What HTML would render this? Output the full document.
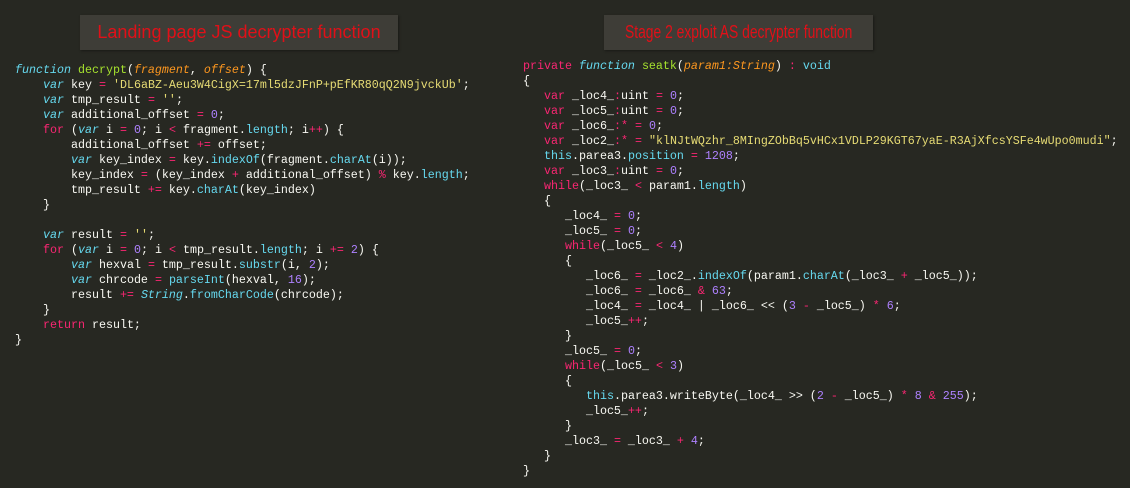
<!DOCTYPE html>
<html><head><meta charset="utf-8"><style>
html,body{margin:0;padding:0;width:1130px;height:488px;background:#272822;overflow:hidden}
.t{position:absolute;top:15px;height:35px;background:#3e3d37;color:#e01018;font:18px "Liberation Sans",sans-serif;line-height:35px;text-align:center;white-space:nowrap;box-shadow:1px 1px 2px #1a1a16}
.t span{position:absolute;left:21px;top:0;transform-origin:0 50%}
pre{position:absolute;margin:0;font-family:"Liberation Mono",monospace;font-size:11.67px;line-height:15px;color:#f8f8f2;white-space:pre}
.k{color:#f92672}.i{color:#66d9ef;font-style:italic}.f{color:#a6e22e}.p{color:#fd971f;font-style:italic}
.s{color:#e6db74}.n{color:#ae81ff}.m{color:#66d9ef}.c{color:#66d9ef}
</style></head><body>
<div class="t" style="left:80px;width:318px">Landing page JS decrypter function</div>
<div class="t" style="left:604px;width:269px"><span style="transform:scaleX(0.77)">Stage 2 exploit AS decrypter function</span></div>
<pre style="left:15px;top:63px"><span class="i">function</span> <span class="f">decrypt</span>(<span class="p">fragment</span>, <span class="p">offset</span>) {
    <span class="i">var</span> key <span class="k">=</span> <span class="s">'DL6aBZ-Aeu3W4CigX=17ml5dzJFnP+pEfKR80qQ2N9jvckUb'</span>;
    <span class="i">var</span> tmp_result <span class="k">=</span> <span class="s">''</span>;
    <span class="i">var</span> additional_offset <span class="k">=</span> <span class="n">0</span>;
    <span class="k">for</span> (<span class="i">var</span> i <span class="k">=</span> <span class="n">0</span>; i <span class="k">&lt;</span> fragment.<span class="m">length</span>; i<span class="k">++</span>) {
        additional_offset <span class="k">+=</span> offset;
        <span class="i">var</span> key_index <span class="k">=</span> key.<span class="m">indexOf</span>(fragment.<span class="m">charAt</span>(i));
        key_index <span class="k">=</span> (key_index <span class="k">+</span> additional_offset) <span class="k">%</span> key.<span class="m">length</span>;
        tmp_result <span class="k">+=</span> key.<span class="m">charAt</span>(key_index)
    }

    <span class="i">var</span> result <span class="k">=</span> <span class="s">''</span>;
    <span class="k">for</span> (<span class="i">var</span> i <span class="k">=</span> <span class="n">0</span>; i <span class="k">&lt;</span> tmp_result.<span class="m">length</span>; i <span class="k">+=</span> <span class="n">2</span>) {
        <span class="i">var</span> hexval <span class="k">=</span> tmp_result.<span class="m">substr</span>(i, <span class="n">2</span>);
        <span class="i">var</span> chrcode <span class="k">=</span> <span class="m">parseInt</span>(hexval, <span class="n">16</span>);
        result <span class="k">+=</span> <span class="i">String</span>.<span class="m">fromCharCode</span>(chrcode);
    }
    <span class="k">return</span> result;
}</pre>
<pre style="left:523px;top:59px"><span class="k">private</span> <span class="i">function</span> <span class="f">seatk</span>(<span class="p">param1:String</span>) <span class="k">:</span> <span class="c">void</span>
{
   <span class="k">var</span> _loc4_<span class="k">:</span>uint <span class="k">=</span> <span class="n">0</span>;
   <span class="k">var</span> _loc5_<span class="k">:</span>uint <span class="k">=</span> <span class="n">0</span>;
   <span class="k">var</span> _loc6_<span class="k">:*</span> <span class="k">=</span> <span class="n">0</span>;
   <span class="k">var</span> _loc2_<span class="k">:*</span> <span class="k">=</span> <span class="s">"klNJtWQzhr_8MIngZObBq5vHCx1VDLP29KGT67yaE-R3AjXfcsYSFe4wUpo0mudi"</span>;
   <span class="c">this</span>.parea3.<span class="m">position</span> <span class="k">=</span> <span class="n">1208</span>;
   <span class="k">var</span> _loc3_<span class="k">:</span>uint <span class="k">=</span> <span class="n">0</span>;
   <span class="k">while</span>(_loc3_ <span class="k">&lt;</span> param1.<span class="m">length</span>)
   {
      _loc4_ <span class="k">=</span> <span class="n">0</span>;
      _loc5_ <span class="k">=</span> <span class="n">0</span>;
      <span class="k">while</span>(_loc5_ <span class="k">&lt;</span> <span class="n">4</span>)
      {
         _loc6_ <span class="k">=</span> _loc2_.<span class="m">indexOf</span>(param1.<span class="m">charAt</span>(_loc3_ <span class="k">+</span> _loc5_));
         _loc6_ <span class="k">=</span> _loc6_ <span class="k">&amp;</span> <span class="n">63</span>;
         _loc4_ <span class="k">=</span> _loc4_ | _loc6_ &lt;&lt; (<span class="n">3</span> <span class="k">-</span> _loc5_) <span class="k">*</span> <span class="n">6</span>;
         _loc5_<span class="k">++</span>;
      }
      _loc5_ <span class="k">=</span> <span class="n">0</span>;
      <span class="k">while</span>(_loc5_ <span class="k">&lt;</span> <span class="n">3</span>)
      {
         <span class="c">this</span>.parea3.writeByte(_loc4_ &gt;&gt; (<span class="n">2</span> <span class="k">-</span> _loc5_) <span class="k">*</span> <span class="n">8</span> <span class="k">&amp;</span> <span class="n">255</span>);
         _loc5_<span class="k">++</span>;
      }
      _loc3_ <span class="k">=</span> _loc3_ <span class="k">+</span> <span class="n">4</span>;
   }
}</pre>
</body></html>
